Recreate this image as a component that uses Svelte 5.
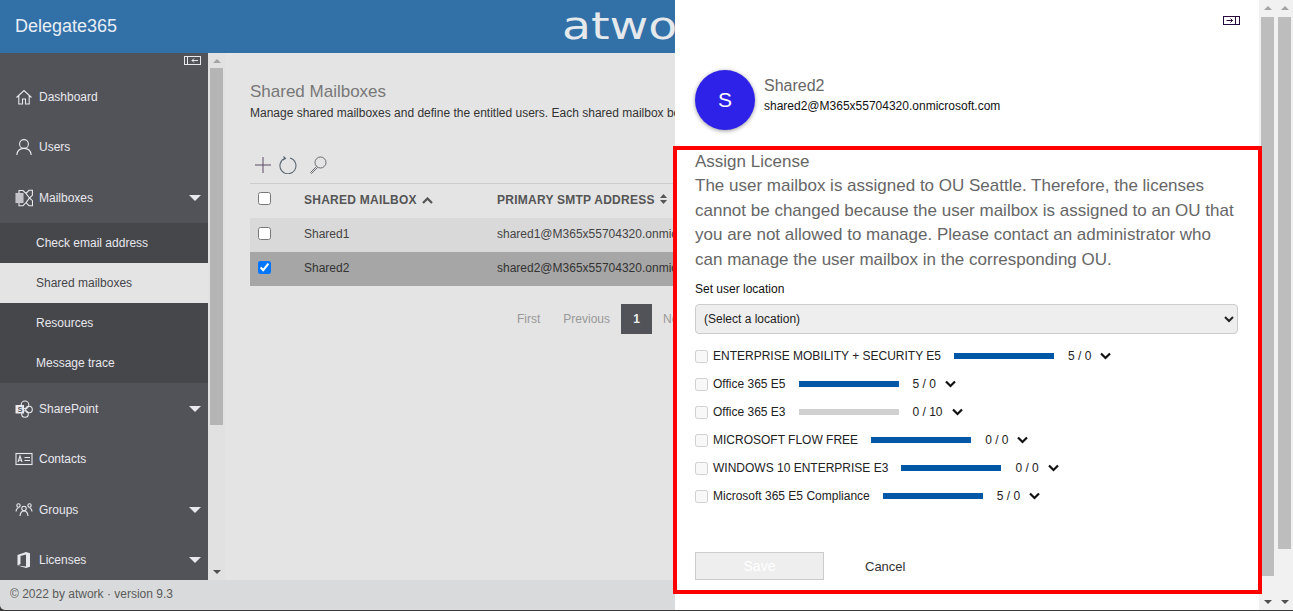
<script>
  const menu = [
    { name: 'Dashboard', icon: 'home' },
    { name: 'Users', icon: 'user' },
    { name: 'Mailboxes', icon: 'mail', arrow: true, sub: ['Check email address', 'Shared mailboxes', 'Resources', 'Message trace'] },
    { name: 'SharePoint', icon: 'sharepoint', arrow: true },
    { name: 'Contacts', icon: 'contacts' },
    { name: 'Groups', icon: 'groups', arrow: true },
    { name: 'Licenses', icon: 'office', arrow: true },
  ];

  const mailboxes = [
    { name: 'Shared1', address: 'shared1@M365x55704320.onmicrosoft.com', checked: false },
    { name: 'Shared2', address: 'shared2@M365x55704320.onmicrosoft.com', checked: true },
  ];

  const licenses = [
    { name: 'ENTERPRISE MOBILITY + SECURITY E5', count: '5 / 0' },
    { name: 'Office 365 E5', count: '5 / 0' },
    { name: 'Office 365 E3', count: '0 / 10', empty: true },
    { name: 'MICROSOFT FLOW FREE', count: '0 / 0' },
    { name: 'WINDOWS 10 ENTERPRISE E3', count: '0 / 0' },
    { name: 'Microsoft 365 E5 Compliance', count: '5 / 0' },
  ];
</script>

{#snippet menuIcon(name)}
  <svg class="menu-icon" viewBox="0 0 18 18" fill="none" stroke="#e8e8ee" stroke-width="1.1">
    {#if name === 'home'}
      <path d="M1.5 9.5 9 2.5l7.5 7M3.8 8v8h3.7v-5h3v5h3.7V8" />
    {:else if name === 'user'}
      <circle cx="9" cy="6" r="4.4" />
      <path d="M1.8 17c.4-4.2 3-6.6 7.2-6.6s6.800 2.400 7.200 6.600" />
    {:else if name === 'mail'}
      <rect x="1" y="4.500" width="7" height="9" fill="#e8e8ee" opacity=".75" />
      <path d="M4 4.500V1.500h4l3 3 3-3.200h3.400v5L14.500 9l3 2.700v5H14l-3-3-3 3H4v-3M11 4.500 14.500 9 11 13.700" />
    {:else if name === 'sharepoint'}
      <circle cx="10" cy="4.800" r="3.800" />
      <circle cx="14" cy="9.500" r="3.300" />
      <circle cx="10" cy="14" r="3.300" />
      <rect x=".5" y="5" width="8.500" height="8.500" fill="#e8e8ee" stroke="none" />
      <text x="2.700" y="11.500" font-size="7" font-weight="bold" fill="#525358" stroke="none">S</text>
    {:else if name === 'contacts'}
      <rect x="1" y="3.500" width="16" height="11" />
      <path d="M3 12l2-6 2 6M3.700 10.300h2.600M9.500 7.500H15M9.500 10.500H15" />
    {:else if name === 'groups'}
      <circle cx="3.500" cy="4.500" r="1.700" />
      <circle cx="14.500" cy="4.500" r="1.700" />
      <circle cx="9" cy="7.500" r="2.200" />
      <path d="M1 10.500c.2-2 1-3.500 2.500-3.800M17 10.500c-.2-2-1-3.500-2.500-3.800M5 15c.3-3 1.800-5 4-5s3.700 2 4 5" />
    {:else if name === 'office'}
      <path d="M2.500 14.500V4L11 1l4 1.300v13.400L11 17l-8.500-2.500 8.500 1V3.500L5.500 5v8l-3 1.500Z" fill="#e8e8ee" stroke="none" />
    {/if}
  </svg>
{/snippet}

{#snippet scrollbar(cls, thumb)}
  <div class="scrollbar {cls}">
    <span class="arrow-up"></span>
    <div class="thumb" style="height: {thumb}px"></div>
    <div class="track-rest"></div>
    <span class="arrow-down"></span>
  </div>
{/snippet}

{#snippet chevron()}
  <svg class="chevron" viewBox="0 0 11 8" fill="none" stroke="#111" stroke-width="2.200">
    <path d="M1 1.500 5.500 6 10 1.500" />
  </svg>
{/snippet}

<div class="app">
  <header class="topbar">
    <div class="brand">Delegate365</div>
    <div class="logo">atwo</div>
  </header>

  <div class="middle">
    <nav class="sidebar">
      <div class="collapse-row">
        <svg width="17" height="9" viewBox="0 0 17 9" fill="none" stroke="#e8e8ee">
          <rect x=".5" y=".5" width="16" height="8" />
          <path d="M3.500 1v7M14 4.500H8M10 2.500 8 4.500l2 2" />
        </svg>
      </div>
      {#each menu as item}
        <div class="menu-item">
          {@render menuIcon(item.icon)}
          <span>{item.name}</span>
          {#if item.arrow}<i class="caret"></i>{/if}
        </div>
        {#if item.sub}
          <div class="submenu">
            {#each item.sub as sub}
              <div class="sub-item" class:active={sub === 'Shared mailboxes'}>{sub}</div>
            {/each}
          </div>
        {/if}
      {/each}
    </nav>
    {@render scrollbar('side-scroll', 357)}

    <main class="content">
      <h1>Shared Mailboxes</h1>
      <p class="intro">Manage shared mailboxes and define the entitled users. Each shared mailbox belongs to an organizational unit and can be managed here.</p>

      <div class="toolbar">
        <svg width="16" height="16" viewBox="0 0 16 16" stroke="#5c4a66" fill="none"><path d="M8 0v16M0 8h16" /></svg>
        <svg width="18" height="18" viewBox="0 0 18 18" stroke="#5a6672" fill="none" stroke-width="1.100"><path d="M6 2.300a8 8 0 1 0 5-.3M4.500 0.500 6.500 2.500 4 4" /></svg>
        <svg class="search" width="18" height="18" viewBox="0 0 18 18" stroke="#6d6a72" fill="none"><circle cx="11.500" cy="6.500" r="5.500" /><path d="M7.500 10.500 1.500 16.500l1 1 6-6" /></svg>
      </div>

      <table>
        <thead>
          <tr>
            <th class="check"><input type="checkbox" /></th>
            <th class="name">
              SHARED MAILBOX
              <svg width="11" height="7" viewBox="0 0 11 7" fill="none" stroke="#555" stroke-width="2.200"><path d="M1 6 5.500 1.500 10 6" /></svg>
            </th>
            <th>
              PRIMARY SMTP ADDRESS
              <svg width="7" height="10" viewBox="0 0 7 10" fill="#555"><path d="M3.500 0 7 4H0ZM0 6h7l-3.500 4Z" /></svg>
            </th>
          </tr>
        </thead>
        <tbody>
          {#each mailboxes as box}
            <tr class:selected={box.checked}>
              <td class="check"><input type="checkbox" checked={box.checked} /></td>
              <td>{box.name}</td>
              <td>{box.address}</td>
            </tr>
          {/each}
        </tbody>
      </table>

      <div class="pager">
        <span>First</span>
        <span>Previous</span>
        <span class="current">1</span>
        <span>Next</span>
      </div>
    </main>
  </div>

  <footer class="footer">© 2022 by atwork · version 9.3</footer>

  <aside class="panel">
    <div class="panel-body">
      <div class="panel-top">
        <svg width="17" height="9" viewBox="0 0 17 9" fill="none" stroke="#2a0a3a">
          <rect x=".5" y=".5" width="16" height="8" />
          <path d="M12.500 1v7M3.500 4.500h6M7.500 2.500l2 2-2 2" />
        </svg>
      </div>

      <div class="identity">
        <div class="avatar">S</div>
        <div>
          <div class="identity-name">Shared2</div>
          <div class="identity-mail">shared2@M365x55704320.onmicrosoft.com</div>
        </div>
      </div>

      <h2>Assign License</h2>
      <p class="notice">The user mailbox is assigned to OU Seattle. Therefore, the licenses cannot be changed because the user mailbox is assigned to an OU that you are not allowed to manage. Please contact an administrator who can manage the user mailbox in the corresponding OU.</p>

      <label class="location-label" for="location">Set user location</label>
      <select id="location">
        <option>(Select a location)</option>
      </select>

      <ul class="licenses">
        {#each licenses as lic}
          <li>
            <input type="checkbox" disabled />
            <span class="lic-name">{lic.name}</span>
            <span class="bar" class:empty={lic.empty}></span>
            <span class="lic-count">{lic.count}</span>
            {@render chevron()}
          </li>
        {/each}
      </ul>

      <div class="actions">
        <button class="save" disabled>Save</button>
        <span class="cancel">Cancel</span>
      </div>
    </div>
    {@render scrollbar('panel-scroll', 559)}
    {@render scrollbar('panel-scroll', 532)}
  </aside>

  <div class="highlight"></div>
</div>

<style>
  :global(body) {
    margin: 0;
    overflow: hidden;
  }

  .app {
    position: relative;
    width: 1293px;
    height: 611px;
    overflow: hidden;
    display: flex;
    flex-direction: column;
    background: #3a3a3a;
    font-family: "Liberation Sans", Arial, sans-serif;
    font-size: 12px;
  }

  .topbar {
    height: 53px;
    flex: none;
    background: #3270a8;
    display: flex;
    align-items: center;
    position: relative;
  }

  .brand {
    margin-left: 15px;
    color: #e8eef4;
    font-size: 18px;
  }

  .logo {
    position: absolute;
    left: 562px;
    top: 5px;
    color: #e6e9ec;
    font-family: "DejaVu Sans", sans-serif;
    font-size: 37px;
    transform: scaleX(1.28);
    transform-origin: left;
  }

  .middle {
    flex: 1;
    min-height: 0;
    display: flex;
    background: #e4e4e4;
  }

  .sidebar {
    width: 208px;
    flex: none;
    background: #525358;
    overflow: hidden;
    color: #e8e8ee;
  }

  .collapse-row {
    height: 18.600px;
    display: flex;
    justify-content: flex-end;
    align-items: flex-start;
    padding: 3px 7px 0 0;
    box-sizing: border-box;
  }

  .menu-item {
    height: 50.600px;
    display: flex;
    align-items: center;
    padding: 0 7px 0 15px;
    gap: 6px;
  }

  .menu-icon {
    width: 18px;
    height: 18px;
    flex: none;
  }

  .caret {
    margin-left: auto;
    border: 6px solid transparent;
    border-top: 6px solid #e8e8ee;
    border-bottom: 0;
  }

  .submenu {
    background: #46474b;
  }

  .sub-item {
    height: 40px;
    line-height: 40px;
    padding-left: 36px;
  }

  .sub-item.active {
    background: #e4e4e4;
    color: #44454a;
  }

  .scrollbar {
    width: 17px;
    flex: none;
    background: #f1f1f1;
    display: flex;
    flex-direction: column;
    align-items: center;
  }

  .side-scroll {
    background: #e1e1e1;
  }

  .thumb {
    width: 13px;
    background: #bdbdbd;
    flex: none;
  }

  .side-scroll .thumb {
    background: #b5b5b5;
  }

  .track-rest {
    flex: 1;
  }

  .arrow-up,
  .arrow-down {
    height: 17px;
    flex: none;
    width: 0;
    box-sizing: border-box;
    border-left: 4px solid transparent;
    border-right: 4px solid transparent;
  }

  .arrow-up {
    border-bottom: 4px solid #a3a3a3;
    border-top: 6px solid transparent;
    height: 10px;
    margin-bottom: 7px;
  }

  .side-scroll .arrow-up {
    margin-bottom: 5px;
  }

  .arrow-down {
    border-top: 4px solid #505050;
    height: 10px;
    margin-top: 7px;
  }

  .content {
    flex: 1;
    min-width: 0;
    padding: 0 0 0 25px;
    overflow: hidden;
    color: #444;
  }

  h1 {
    margin: 29px 0 0;
    font-size: 17px;
    font-weight: normal;
    line-height: 20px;
    color: #777;
  }

  .intro {
    margin: 4px 0 0;
    line-height: 14px;
    white-space: nowrap;
    color: #333;
  }

  .toolbar {
    display: flex;
    align-items: center;
    gap: 8px;
    margin: 33px 0 0 5px;
    height: 24px;
  }

  .search {
    margin-left: 4px;
  }

  table {
    width: 700px;
    table-layout: fixed;
    border-collapse: collapse;
    margin-top: 6px;
  }

  thead tr {
    border-top: 1px solid #ccc;
  }

  th {
    height: 32px;
    padding: 0 0 2px;
    text-align: left;
    font-size: 12px;
    letter-spacing: .25px;
    color: #555;
  }

  th svg {
    margin-left: 2px;
  }

  td {
    height: 32px;
    padding: 0 0 2px;
    background: #d9d9d9;
    color: #444;
    white-space: nowrap;
    overflow: hidden;
  }

  .selected td {
    background: #a6a6a6;
    color: #333;
  }

  .check {
    width: 54px;
  }

  td.check,
  th.check {
    height: 34px;
    padding: 0;
  }

  .check input {
    margin: 0 0 4px 8px;
    display: block;
  }

  th.check input {
    margin-bottom: 5px;
  }

  .name {
    width: 193px;
  }

  .pager {
    display: flex;
    align-items: center;
    margin: 18px 0 0 267px;
    height: 30px;
    gap: 23px;
    color: #999;
  }

  .pager .current {
    width: 31px;
    height: 30px;
    line-height: 30px;
    text-align: center;
    background: #525358;
    color: #eee;
    font-weight: bold;
    margin-left: -12px;
    margin-right: -12px;
  }

  .footer {
    height: 30px;
    flex: none;
    margin-bottom: 1px;
    line-height: 29px;
    padding-left: 10px;
    background: #d9dadb;
    color: #5a5a5a;
    border-bottom-left-radius: 5px;
  }

  .panel {
    position: absolute;
    top: 0;
    left: 675px;
    right: 0;
    bottom: 1px;
    background: #fff;
    display: flex;
  }

  .panel-body {
    flex: 1;
    min-width: 0;
    padding: 0 21px 0 20px;
  }

  .panel-scroll .thumb {
    background: #bdbdbd;
  }

  .panel-top {
    height: 70px;
    display: flex;
    justify-content: flex-end;
    padding: 16px 0 0;
    margin-right: -2px;
    box-sizing: border-box;
  }

  .identity {
    display: flex;
    gap: 9px;
    height: 60px;
    margin-bottom: 22px;
  }

  .avatar {
    width: 60px;
    height: 60px;
    border-radius: 50%;
    background: #2f22e8;
    box-shadow: 0 1px 4px rgba(0, 0, 0, .4);
    color: #fff;
    font-size: 21px;
    line-height: 60px;
    text-align: center;
    flex: none;
  }

  .identity-name {
    font-size: 16px;
    color: #666;
    margin-top: 7px;
    line-height: 18px;
  }

  .identity-mail {
    color: #111;
    margin-top: 4px;
    line-height: 14px;
  }

  h2 {
    margin: 0;
    font-size: 17px;
    font-weight: normal;
    line-height: 20px;
    color: #666;
  }

  .notice {
    margin: 2px 0 0;
    font-size: 17px;
    line-height: 24.500px;
    color: #666;
  }

  .location-label {
    display: block;
    margin-top: 10px;
    color: #111;
    line-height: 14px;
  }

  select {
    display: block;
    width: 100%;
    height: 30px;
    margin-top: 8px;
    padding-left: 4px;
    background: #eee;
    border: 1px solid #ccc;
    border-radius: 4px;
    font-family: inherit;
    font-size: 12px;
    color: #222;
  }

  .licenses {
    list-style: none;
    margin: 8px 0 0;
    padding: 0;
  }

  .licenses li {
    display: flex;
    align-items: center;
    height: 28px;
    color: #222;
  }

  .licenses input {
    margin: 0 5px 0 0;
    flex: none;
  }

  .bar {
    width: 100px;
    height: 6px;
    margin: 0 14px 0 13px;
    background: #0057a6;
    flex: none;
  }

  .bar.empty {
    background: #d0d0d0;
  }

  .chevron {
    width: 11px;
    height: 8px;
    margin-left: 9px;
  }

  .actions {
    display: flex;
    align-items: center;
    margin-top: 42px;
  }

  .save {
    width: 129px;
    height: 28px;
    padding: 0;
    background: #eee;
    border: 1px solid #ccc;
    color: #fff;
    font-family: inherit;
    font-size: 14px;
  }

  .cancel {
    margin: 1px 0 0 41px;
    color: #333;
    font-size: 13px;
  }

  .highlight {
    position: absolute;
    left: 673px;
    top: 146px;
    width: 589px;
    height: 448px;
    box-sizing: border-box;
    border: 4px solid #f00;
    pointer-events: none;
  }
</style>
